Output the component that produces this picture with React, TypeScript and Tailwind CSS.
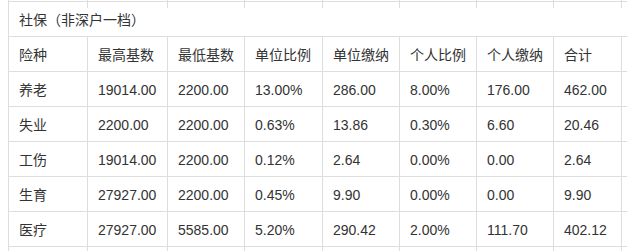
import React from 'react'

type Row = string[]

const widths = ['w-[79px]', 'w-[80px]', 'w-[77px]', 'w-[78px]', 'w-[77px]', 'w-[77px]', 'w-[77px]', 'w-[68px]', 'w-[80px]']

const header: Row = ['险种', '最高基数', '最低基数', '单位比例', '单位缴纳', '个人比例', '个人缴纳', '合计', '']

const rows: Row[] = [
  ['养老', '19014.00', '2200.00', '13.00%', '286.00', '8.00%', '176.00', '462.00', ''],
  ['失业', '2200.00', '2200.00', '0.63%', '13.86', '0.30%', '6.60', '20.46', ''],
  ['工伤', '19014.00', '2200.00', '0.12%', '2.64', '0.00%', '0.00', '2.64', ''],
  ['生育', '27927.00', '2200.00', '0.45%', '9.90', '0.00%', '0.00', '9.90', ''],
  ['医疗', '27927.00', '5585.00', '5.20%', '290.42', '2.00%', '111.70', '402.12', ''],
]

function Line({ cells, h = 'h-[35px]', top = true }: { cells: Row; h?: string; top?: boolean }) {
  return (
    <div className={`flex ${h} ${top ? 'border-t border-[#dddddd]' : ''}`}>
      {cells.map((c, i) => (
        <div
          key={i}
          className={`${widths[i]} shrink-0 border-l border-[#dddddd] pl-[10px] pt-[8px] leading-[20px] whitespace-nowrap`}
        >
          {c}
        </div>
      ))}
    </div>
  )
}

export default function App() {
  const empty: Row = ['', '', '', '', '', '', '', '', '']
  return (
    <div
      className="w-[627px] h-[251px] overflow-hidden bg-white text-[14px] text-[#333333]"
      style={{ fontFamily: '"Liberation Sans", Arial, "Noto Sans CJK SC", sans-serif' }}
    >
      <div className="ml-[8px] w-[700px]">
        <Line cells={empty} h="h-[1px]" top={false} />
        <div className="h-[35px] border-t border-l border-[#dddddd] pl-[10px] pt-[8px] leading-[20px]">
          社保（非深户一档）
        </div>
        <Line cells={header} />
        {rows.map((r, i) => (
          <Line key={i} cells={r} />
        ))}
        <Line cells={empty} />
      </div>
    </div>
  )
}
